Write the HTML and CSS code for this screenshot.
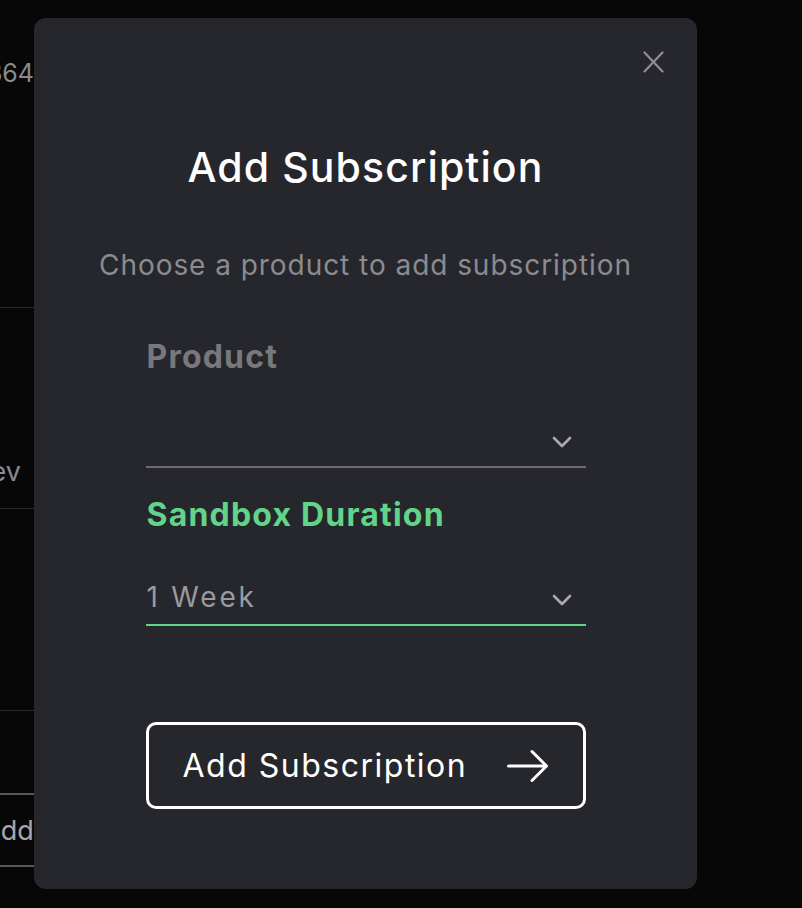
FILE: index.html
```html
<!DOCTYPE html>
<html lang="en">
<head>
<meta charset="utf-8">
<title>Add Subscription</title>
<link rel="stylesheet" href="styles.css">
</head>
<body>
<div class="page">
  <div class="row row-first"><span class="cell cell-id">0x8a3f2364</span></div>
  <div class="row row-second"><span class="cell cell-env">dev</span></div>
  <div class="row row-third"></div>
  <div class="page-actions"><button class="ghost-btn" type="button">Add Subscription</button></div>
</div>

<div class="overlay">
  <div class="modal" role="dialog" aria-labelledby="modal-title">
    <button class="close-btn" type="button" aria-label="Close">
      <svg width="21" height="22" viewBox="0 0 21 22" fill="none" stroke="currentColor" stroke-width="2.2" stroke-linecap="round">
        <path d="M1.5 1.5 L19.5 20.5 M19.5 1.5 L1.5 20.5"/>
      </svg>
    </button>
    <h1 id="modal-title" class="title">Add Subscription</h1>
    <p class="subtitle">Choose a product to add subscription</p>
    <form class="form">
      <div class="field">
        <label class="label">Product</label>
        <div class="select">
          <span class="select-value"></span>
          <svg class="chevron" width="20" height="12" viewBox="0 0 20 12" fill="none" stroke="currentColor" stroke-width="2.6" stroke-linecap="round" stroke-linejoin="round"><path d="M2 2 L10 10 L18 2"/></svg>
        </div>
      </div>
      <div class="field field-active">
        <label class="label">Sandbox Duration</label>
        <div class="select">
          <span class="select-value">1 Week</span>
          <svg class="chevron" width="20" height="12" viewBox="0 0 20 12" fill="none" stroke="currentColor" stroke-width="2.6" stroke-linecap="round" stroke-linejoin="round"><path d="M2 2 L10 10 L18 2"/></svg>
        </div>
      </div>
      <button class="submit" type="button">
        <span>Add Subscription</span>
        <svg width="42" height="34" viewBox="0 0 42 34" fill="none" stroke="currentColor" stroke-width="3" stroke-linecap="round" stroke-linejoin="round"><path d="M1.5 17 H39.5 M25 2.5 L39.5 17 L25 31.5"/></svg>
      </button>
    </form>
  </div>
</div>
</body>
</html>
```

FILE: styles.css
```css
* { box-sizing: border-box; }
html, body { margin: 0; padding: 0; }
body {
  background: #070707;
  font-family: Inter, "Noto Sans", sans-serif;
  width: 802px;
  height: 908px;
  overflow: hidden;
}

/* background page (mostly hidden under modal) */
.page {
  margin-left: -110px;
  width: 700px;
  display: flex;
  flex-direction: column;
}
.row {
  border-bottom: 1px solid #2a2a2c;
  display: flex;
}
.cell {
  color: #8a8a8e;
  font-size: 27px;
  line-height: 32px;
  display: flex;
  justify-content: flex-end;
  white-space: nowrap;
  flex-shrink: 0;
}
.row-first { height: 308px; padding-top: 57px; }
.cell-id { width: 144px; font-size: 25px; }
.row-second { height: 201px; align-items: flex-end; padding-bottom: 20px; }
.cell-env { width: 131px; }
.row-third { height: 202px; }
.page-actions { padding-top: 82px; }
.ghost-btn {
  background: transparent;
  border: 2px solid #55555a;
  border-radius: 0;
  height: 74px;
  padding: 0 0 0 90px;
  color: #a8a8ac;
  font-family: inherit;
  font-size: 27px;
  width: 400px;
  text-align: left;
  white-space: nowrap;
}

/* overlay */
.overlay {
  position: absolute;
  inset: 0;
}
.modal {
  position: absolute;
  left: 34px;
  top: 18px;
  width: 663px;
  height: 871px;
  background: #26272c;
  border-radius: 12px;
  display: flex;
  flex-direction: column;
  align-items: center;
  padding-top: 124px;
}
.close-btn {
  position: absolute;
  top: 33px;
  right: 33px;
  background: none;
  border: 0;
  padding: 0;
  color: #8e8e93;
  display: flex;
}
.title {
  margin: 0;
  color: #ffffff;
  font-size: 41px;
  font-weight: 500;
  line-height: 50px;
  letter-spacing: 1.1px;
}
.subtitle {
  margin: 55px 0 0;
  color: #8b8b90;
  font-size: 28px;
  font-weight: 400;
  line-height: 36px;
  letter-spacing: 0.95px;
}
.form {
  width: 440px;
  margin-top: 54px;
  display: flex;
  flex-direction: column;
}
.field { display: flex; flex-direction: column; }
.label {
  color: #78787d;
  font-size: 32px;
  font-weight: 700;
  line-height: 40px;
  letter-spacing: 1.2px;
  padding-left: 1px;
}
.field-active .label { color: #62d48a; }
.select {
  height: 91px;
  border-bottom: 2px solid #6b6b70;
  display: flex;
  align-items: flex-end;
  justify-content: space-between;
  padding: 0 14px 9px 1px;
}
.field + .field { margin-top: 27px; }
.field-active .select { border-bottom-color: #62d48a; }
.select-value {
  color: #9a9a9f;
  font-size: 28px;
  line-height: 36px;
  letter-spacing: 2.8px;
}
.chevron { color: #aaaaae; margin-bottom: 9px; }
.submit {
  margin-top: 96px;
  height: 87px;
  border: 3px solid #ffffff;
  border-radius: 10px;
  background: transparent;
  color: #ffffff;
  font-family: inherit;
  font-size: 32px;
  font-weight: 400;
  letter-spacing: 1.5px;
  display: flex;
  align-items: center;
  justify-content: space-between;
  padding: 0 34px 0 34px;
}
```
